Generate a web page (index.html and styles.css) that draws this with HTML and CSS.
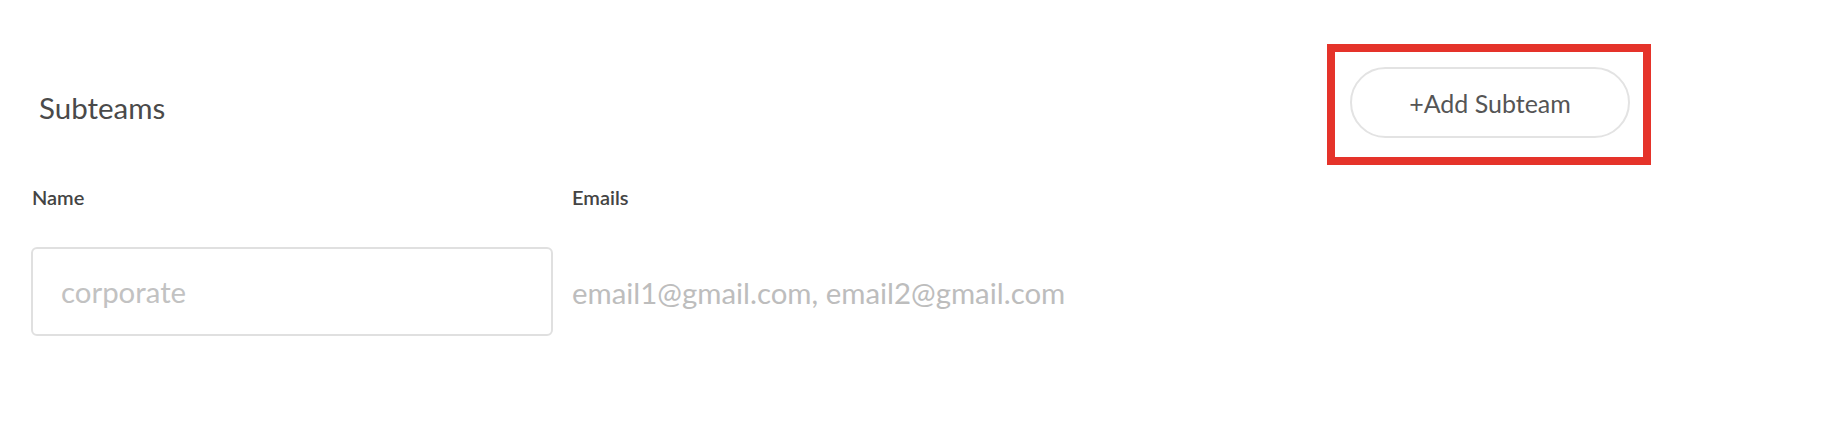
FILE: index.html
```html
<!DOCTYPE html>
<html lang="en">
<head>
<meta charset="utf-8">
<title>Subteams</title>
<link rel="stylesheet" href="styles.css">
</head>
<body>
<main class="page">
  <div class="header">
    <h2 class="title">Subteams</h2>
    <div class="btn-wrap">
      <button class="add-btn" type="button">+Add Subteam</button>
      <span class="highlight"></span>
    </div>
  </div>
  <div class="grid">
    <div class="label label-name">Name</div>
    <div class="label">Emails</div>
    <input class="name-input" type="text" placeholder="corporate">
    <div class="emails">email1@gmail.com, email2@gmail.com</div>
  </div>
</main>
</body>
</html>
```

FILE: styles.css
```css
html, body {
  margin: 0;
  padding: 0;
  background: #ffffff;
}

body {
  font-family: Lato, "Open Sans", "Liberation Sans", sans-serif;
  color: #444;
}

.page {
  padding-left: 31px;
}

.header {
  width: 1599px;
  display: flex;
  justify-content: space-between;
  align-items: flex-start;
  padding-top: 67px;
}

.title {
  margin: 24px 0 0 8px;
  font-size: 29.5px;
  line-height: 34px;
  font-weight: 400;
  color: #4a4a4a;
}

.btn-wrap {
  position: relative;
}

.add-btn {
  display: block;
  width: 280px;
  height: 71px;
  border: 2px solid #e3e3e3;
  border-radius: 36px;
  background: #fff;
  font-family: Lato, "Open Sans", "Liberation Sans", sans-serif;
  font-size: 25px;
  color: #555;
  padding: 1px 0 0;
  cursor: pointer;
}

.highlight {
  position: absolute;
  top: -23px;
  left: -23px;
  right: -21px;
  bottom: -27px;
  border: 8px solid #e5332a;
  pointer-events: none;
}

.grid {
  display: grid;
  grid-template-columns: 522px auto;
  column-gap: 19px;
  row-gap: 40px;
  margin-top: 49px;
  align-items: center;
}

.label {
  font-size: 20px;
  line-height: 20px;
  font-weight: 600;
  color: #444;
}

.label-name {
  margin-left: 1px;
}

.name-input {
  box-sizing: border-box;
  width: 522px;
  height: 89px;
  border: 2px solid #e0e0e0;
  border-radius: 6px;
  padding: 0 0 0 28px;
  font-family: Lato, "Open Sans", "Liberation Sans", sans-serif;
  font-size: 29.4px;
  color: #444;
  outline: none;
}

.name-input::placeholder {
  color: #c2c2c2;
}

.emails {
  font-size: 29.4px;
  color: #bdbdbd;
  padding-top: 2px;
}
```
